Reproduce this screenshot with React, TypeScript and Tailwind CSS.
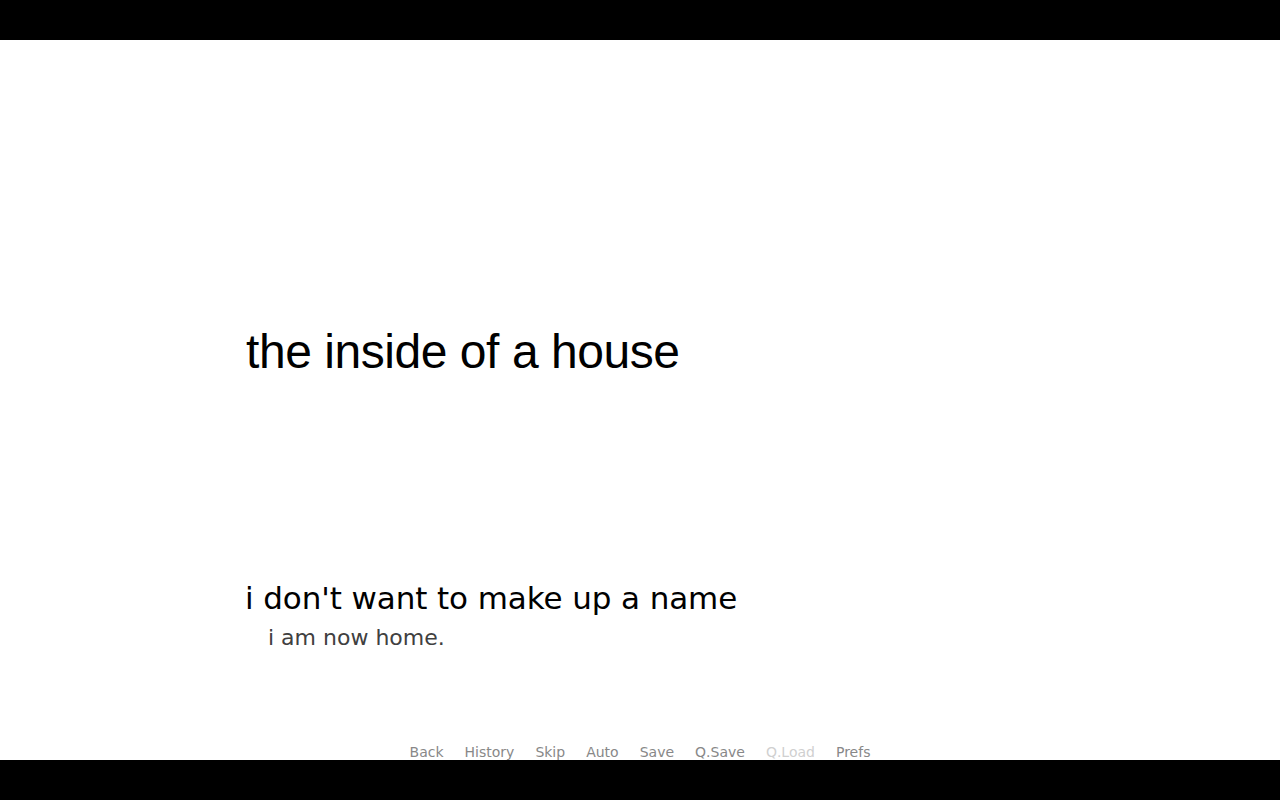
const QUICK = [
  { label: 'Back' },
  { label: 'History' },
  { label: 'Skip' },
  { label: 'Auto' },
  { label: 'Save' },
  { label: 'Q.Save' },
  { label: 'Q.Load', disabled: true },
  { label: 'Prefs' },
]

export default function App() {
  return <div className="flex h-[800px] w-[1280px] flex-col bg-black">
    <div className="h-[40px] shrink-0 bg-black" />
    <div className="flex h-[720px] shrink-0 flex-col overflow-hidden bg-white">
      <div className="mt-[288px] pl-[246px] font-['Liberation_Sans',Arial,sans-serif] text-[48px] leading-none tracking-[-0.45px] text-black">
        the inside of a house
      </div>
      <div className="mt-[207px] pl-[245px] font-['DejaVu_Sans',sans-serif] text-[31px] leading-none tracking-[-0.1px] text-black">
        i don't want to make up a name
      </div>
      <div className="mt-[13px] pl-[268px] font-['DejaVu_Sans',sans-serif] text-[22px] leading-none text-[#404040]">
        i am now home.
      </div>
      <div className="mt-[96px] flex justify-center gap-[21px] font-['DejaVu_Sans',sans-serif] text-[14px] leading-none">
        {QUICK.map((item) => <span key={item.label} className={item.disabled ? 'text-[#d0d0d0]' : 'text-[#888888]'}>{item.label}</span>)}
      </div>
    </div>
    <div className="h-[40px] shrink-0 bg-black" />
  </div>
}
